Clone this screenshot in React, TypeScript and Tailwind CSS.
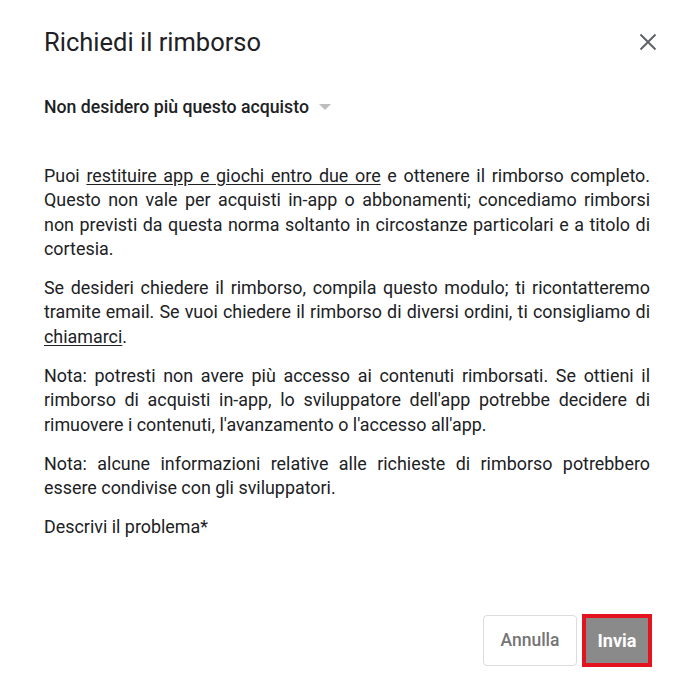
export default function App() {
    return (
        <div className="w-[696px] h-[691px] bg-white flex flex-col" style={{ fontFamily: "Roboto, 'Noto Sans', sans-serif" }}>
            {/* Header */}
            <div className="flex items-center justify-between pl-[44px] pr-[39px] pt-[28px]">
                <h1 className="text-[25.5px] leading-[28px] text-[#202124]">Richiedi il rimborso</h1>
                <svg width="18" height="18" viewBox="0 0 18 18" className="text-[#5f6368]">
                    <path d="M1.5 1.5 L16.5 16.5 M16.5 1.5 L1.5 16.5" stroke="currentColor" strokeWidth="2" fill="none" />
                </svg>
            </div>

            {/* Reason select */}
            <div className="pl-[44px] mt-[39px] flex items-center gap-[10px]">
                <span className="text-[17.7px] font-medium text-[#202124] leading-6">Non desidero più questo acquisto</span>
                <span className="w-0 h-0 border-l-[6px] border-r-[6px] border-t-[6px] border-l-transparent border-r-transparent border-t-[#bdbdbd]" />
            </div>

            {/* Body */}
            <div className="pl-[44px] pr-[46px] mt-[45px] text-[17.9px] leading-[24.3px] text-[#202124] text-justify flex flex-col gap-[15px]">
                <p>
                    Puoi <span className="underline underline-offset-2">restituire app e giochi entro due ore</span> e ottenere il rimborso completo.
                    Questo non vale per acquisti in-app o abbonamenti; concediamo rimborsi non previsti da questa norma soltanto in
                    circostanze particolari e a titolo di cortesia.
                </p>
                <p>
                    Se desideri chiedere il rimborso, compila questo modulo; ti ricontatteremo tramite email. Se vuoi chiedere il
                    rimborso di diversi ordini, ti consigliamo di <span className="underline underline-offset-2">chiamarci</span>.
                </p>
                <p>
                    Nota: potresti non avere più accesso ai contenuti rimborsati. Se ottieni il rimborso di acquisti in-app, lo
                    sviluppatore dell'app potrebbe decidere di rimuovere i contenuti, l'avanzamento o l'accesso all'app.
                </p>
                <p>
                    Nota: alcune informazioni relative alle richieste di rimborso potrebbero essere condivise con gli sviluppatori.
                </p>
                <p className="mt-[-1px]">Descrivi il problema*</p>
            </div>

            {/* Actions */}
            <div className="mt-auto mb-[24px] flex items-center justify-end gap-[5px] pr-[44px]">
                <button className="h-[51px] w-[94px] rounded-[4px] border border-[#dadce0] text-[#757575] text-[17.5px] font-medium">
                    Annulla
                </button>
                <div className="border-[4px] border-[#e3141f]">
                    <button className="h-[45px] w-[62px] bg-[#8a8a8a] text-white text-[18px] font-bold">Invia</button>
                </div>
            </div>
        </div>
    );
}
